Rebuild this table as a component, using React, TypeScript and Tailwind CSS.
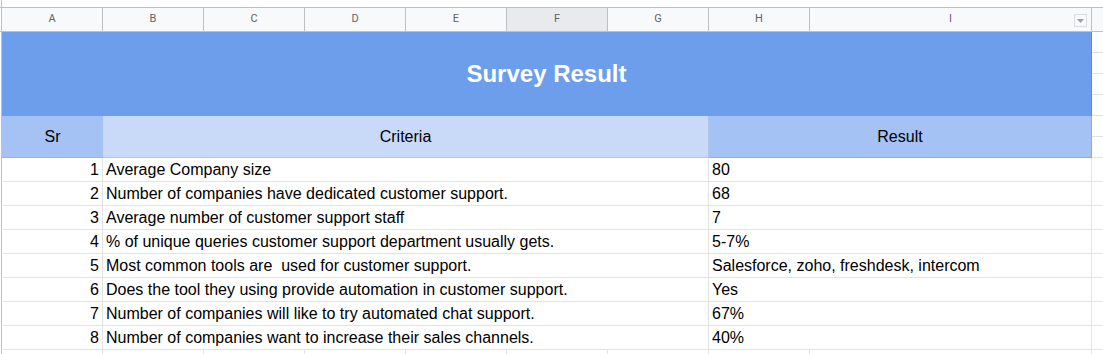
import React from "react";

const rows: [string, string, string][] = [
  ["1", "Average Company size", "80"],
  ["2", "Number of companies have dedicated customer support.", "68"],
  ["3", "Average number of customer support staff", "7"],
  ["4", "% of unique queries customer support department usually gets.", "5-7%"],
  ["5", "Most common tools are  used for customer support.", "Salesforce, zoho, freshdesk, intercom"],
  ["6", "Does the tool they using provide automation in customer support.", "Yes"],
  ["7", "Number of companies will like to try automated chat support.", "67%"],
  ["8", "Number of companies want to increase their sales channels.", "40%"],
];

const letters = ["B", "C", "D", "E", "F", "G", "H"];

export default function App() {
  return (
    <div className="w-[1103px] h-[354px] overflow-hidden bg-white font-['Liberation_Sans',Arial,sans-serif] text-[16px] text-black">
      {/* top strip */}
      <div className="h-[7px] flex">
        <div className="w-[1px]" />
        <div className="w-[1px] bg-[#c0c0c0]" />
      </div>
      {/* column headers */}
      <div className="h-[25px] flex border-y border-[#c0c0c0] bg-[#f8f9fa] font-['Roboto',sans-serif] text-[11px] text-[#5f6368]">
        <div className="w-[1px] bg-white" />
        <div className="w-[102px] border-x border-[#c0c0c0] flex items-center justify-center">A</div>
        {letters.map((l) => (
          <div
            key={l}
            className={
              l === "F"
                ? "w-[101px] border-r border-[#c0c0c0] flex items-center justify-center bg-[#e8eaed]"
                : "w-[101px] border-r border-[#c0c0c0] flex items-center justify-center"
            }
          >
            {l}
          </div>
        ))}
        <div className="relative w-[282px] border-r border-[#c0c0c0] flex items-center justify-center">
          <span className="text-[#7a4f9c]">I</span>
          <div className="absolute right-[4px] top-[6px] w-[13px] h-[13px] border border-[#dadce0] bg-[#f8f9fa] flex items-center justify-center">
            <svg width="7" height="4" viewBox="0 0 7 4">
              <path d="M0 0 L7 0 L3.5 4 Z" fill="#9aa0a6" />
            </svg>
          </div>
        </div>
        <div className="flex-1" />
      </div>
      {/* title */}
      <div className="h-[84px] flex">
        <div className="w-[1px]" />
        <div className="w-[1091px] bg-[#6d9eeb] border-l border-[#c0c0c0] border-r border-r-[#5b8ad6] flex items-center justify-center">
          <span className="text-white font-bold text-[24px] leading-none">Survey Result</span>
        </div>
        <div className="flex-1 flex flex-col">
          <div className="h-[21px] border-b border-[#e2e2e2]" />
          <div className="h-[21px] border-b border-[#e2e2e2]" />
          <div className="h-[21px] border-b border-[#e2e2e2]" />
          <div className="h-[21px] border-b border-[#e2e2e2]" />
        </div>
      </div>
      {/* header 2 */}
      <div className="h-[42px] flex">
        <div className="w-[1px]" />
        <div className="w-[102px] bg-[#a4c2f4] border-l border-[#c0c0c0] border-b border-b-[#9bb4de] flex items-center justify-center">Sr</div>
        <div className="w-[606px] bg-[#c9daf8] border-b border-r border-[#aec3e6] flex items-center justify-center">Criteria</div>
        <div className="w-[383px] bg-[#a4c2f4] border-b border-r border-[#8fabdc] flex items-center justify-center">Result</div>
        <div className="flex-1 flex flex-col">
          <div className="h-[21px] border-b border-[#e2e2e2]" />
          <div className="h-[21px] border-b border-[#e2e2e2]" />
        </div>
      </div>
      {/* data */}
      {rows.map(([n, c, r]) => (
        <div key={n} className="h-[24px] flex leading-[18px]">
          <div className="w-[1px]" />
          <div className="w-[102px] border-l border-l-[#c0c0c0] border-r border-b border-[#e2e2e2] flex items-end justify-end pr-[3px] pb-[2px]">{n}</div>
          <div className="w-[606px] border-r border-b border-[#e2e2e2] flex items-end pl-[3px] pb-[2px] whitespace-pre">{c}</div>
          <div className="w-[383px] border-r border-b border-[#e2e2e2] flex items-end pl-[3px] pb-[2px] whitespace-pre">{r}</div>
          <div className="flex-1 border-b border-[#e2e2e2]" />
        </div>
      ))}
      {/* partial row */}
      <div className="h-[24px] flex">
        <div className="w-[1px]" />
        <div className="w-[102px] border-l border-l-[#c0c0c0] border-r border-[#e2e2e2]" />
        {letters.map((l) => (
          <div key={l} className="w-[101px] border-r border-[#e2e2e2]" />
        ))}
        <div className="w-[282px] border-r border-[#e2e2e2]" />
      </div>
    </div>
  );
}
